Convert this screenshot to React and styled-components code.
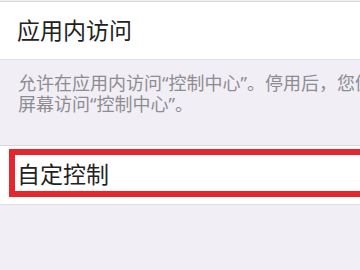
import React from 'react';
import styled, { createGlobalStyle } from 'styled-components';

const GlobalStyle = createGlobalStyle`
  html, body {
    margin: 0;
    padding: 0;
    background: #f1eff5;
    overflow: hidden;
  }
  body {
    font-family: "Noto Sans CJK SC", "Noto Sans", sans-serif;
    -webkit-font-smoothing: antialiased;
  }
`;

// Whole screen, wider content is clipped at the right like the crop
const Screen = styled.div`
  width: 360px;
  height: 270px;
  overflow: hidden;
  background: #f1eff5;
  padding-top: 1px;
  box-sizing: border-box;
`;

const Group = styled.div`
  background: #ffffff;
  border-top: 1px solid #d8d7dc;
  border-bottom: 1px solid #dedde2;
  position: relative;
`;

const Row = styled.div`
  height: ${(p) => p.$h || 57}px;
  display: flex;
  align-items: center;
  padding-left: 17px;
  padding-bottom: 4px;
  box-sizing: border-box;
  font-size: 23px;
  color: #222222;
  white-space: nowrap;
`;

const Footer = styled.div`
  padding: 12px 0 0 18px;
  height: 85px;
  box-sizing: border-box;
  font-size: 18px;
  line-height: 20px;
  color: #8d8c92;
  white-space: nowrap;
`;

// proportional curly quotes, narrower than the CJK full-width ones
const Quote = styled.span`
  font-family: "Noto Sans", sans-serif;
`;

// red annotation box drawn on top of the row
const Highlight = styled.div`
  position: absolute;
  left: 9px;
  top: 3px;
  width: 400px;
  height: 48px;
  box-sizing: border-box;
  border: 6px solid #e5262c;
  pointer-events: none;
`;

export default function App() {
  return (
    <>
      <GlobalStyle />
      <Screen>
        <Group>
          <Row>应用内访问</Row>
        </Group>
        <Footer>
          允许在应用内访问<Quote>“</Quote>控制中心<Quote>”</Quote>。停用后，您仍可以从主
          <br />
          屏幕访问<Quote>“</Quote>控制中心<Quote>”</Quote>。
        </Footer>
        <Group>
          <Row $h={58}>自定控制</Row>
          <Highlight />
        </Group>
      </Screen>
    </>
  );
}
